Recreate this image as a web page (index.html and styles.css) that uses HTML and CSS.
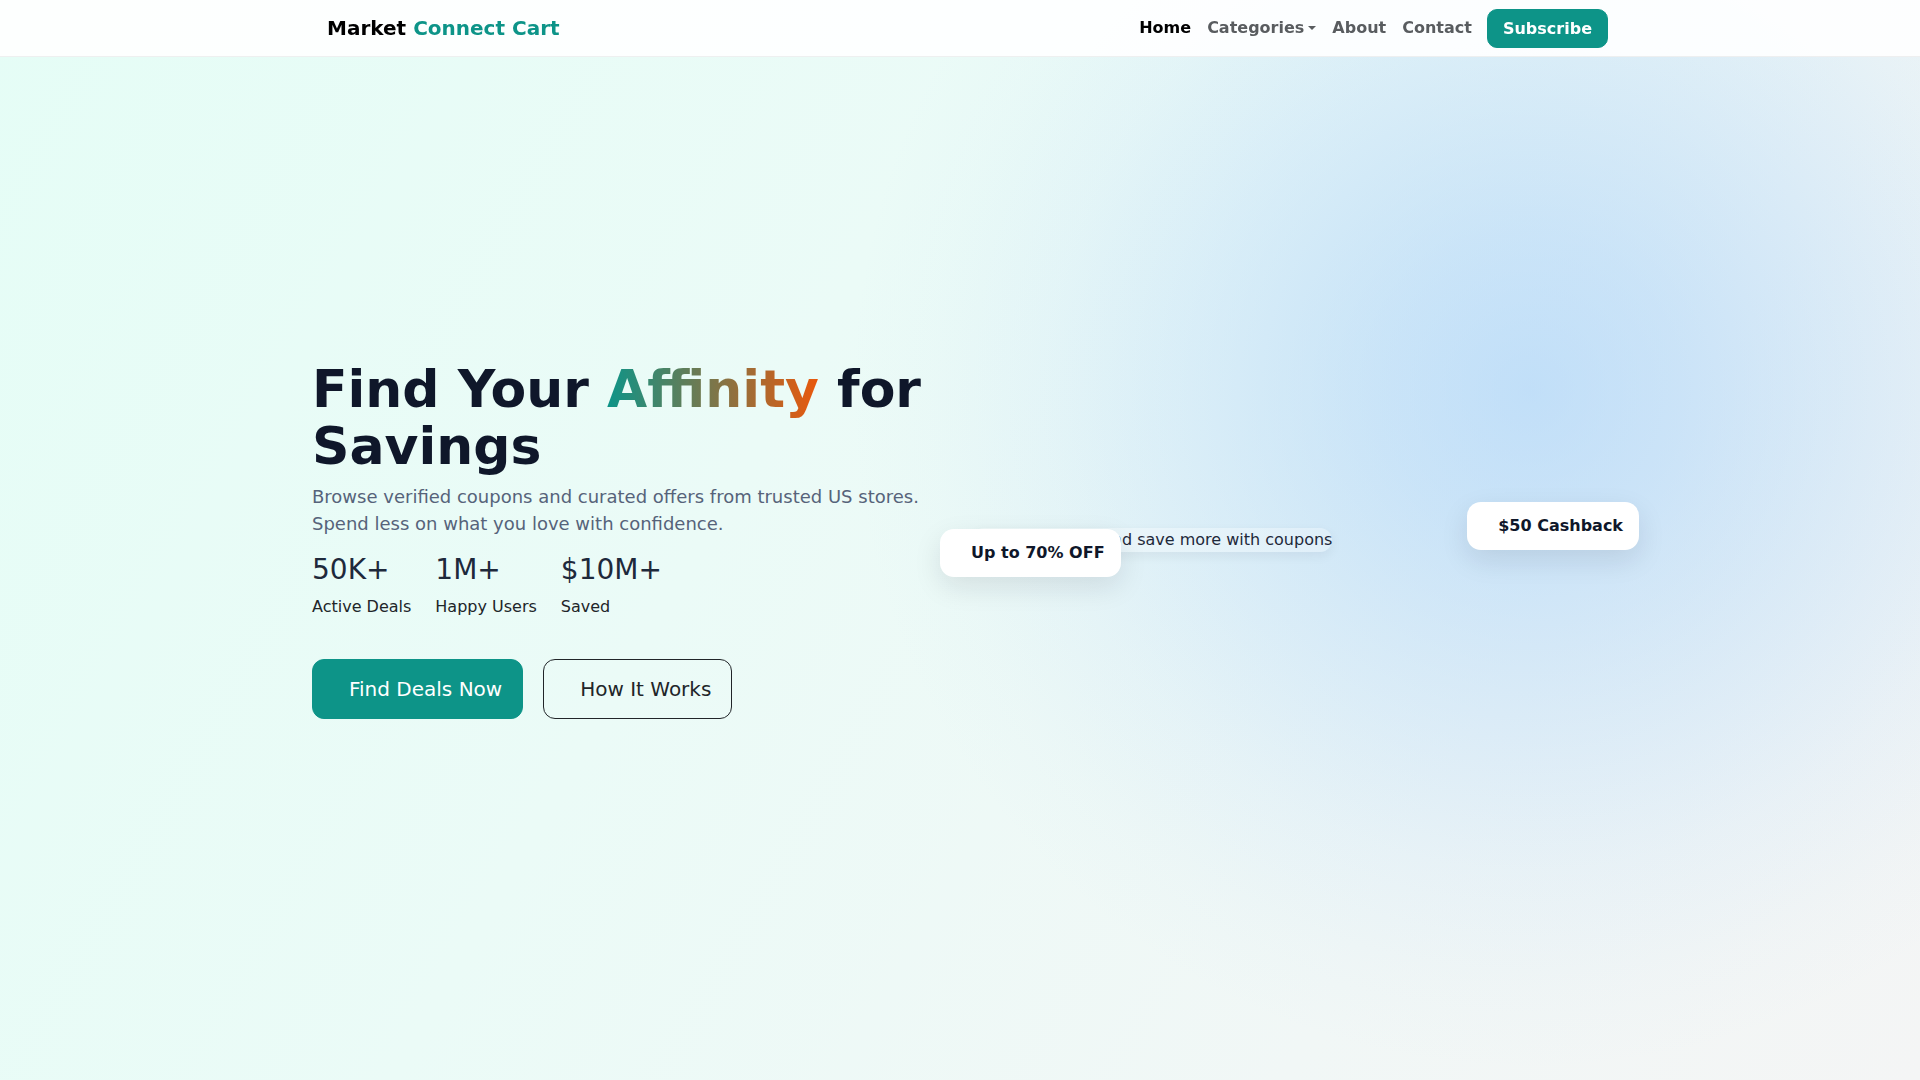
FILE: index.html
```html
<!DOCTYPE html>
<html lang="en">
<head>
<meta charset="utf-8">
<title>Market Connect Cart</title>
<link rel="stylesheet" href="styles.css">
</head>
<body>
<nav class="navbar">
  <div class="nav-inner">
    <a class="brand" href="#">Market <span class="accent">Connect Cart</span></a>
    <div class="nav-right">
      <ul class="nav-links">
        <li><a class="nav-link active" href="#">Home</a></li>
        <li><a class="nav-link dropdown" href="#">Categories<span class="caret"></span></a></li>
        <li><a class="nav-link" href="#">About</a></li>
        <li><a class="nav-link" href="#">Contact</a></li>
      </ul>
      <a class="btn-subscribe" href="#">Subscribe</a>
    </div>
  </div>
</nav>

<section class="hero">
  <div class="hero-inner">
    <div class="hero-left">
      <h1 class="hero-title">Find Your <span class="grad">Affinity</span> for Savings</h1>
      <p class="hero-lead">Browse verified coupons and curated offers from trusted US stores. Spend less on what you love with confidence.</p>
      <div class="stats">
        <div class="stat">
          <div class="stat-num">50K+</div>
          <div class="stat-label">Active Deals</div>
        </div>
        <div class="stat">
          <div class="stat-num">1M+</div>
          <div class="stat-label">Happy Users</div>
        </div>
        <div class="stat">
          <div class="stat-num">$10M+</div>
          <div class="stat-label">Saved</div>
        </div>
      </div>
      <div class="actions">
        <a class="btn btn-teal" href="#">Find Deals Now</a>
        <a class="btn btn-outline" href="#">How It Works</a>
      </div>
    </div>
    <div class="hero-right">
      <div class="visual">
        <div class="alt-pill">Shop smart and save more with coupons</div>
        <div class="float-card card-off">Up to 70% OFF</div>
        <div class="float-card card-cash">$50 Cashback</div>
      </div>
    </div>
  </div>
</section>
</body>
</html>
```

FILE: styles.css
```css
* { box-sizing: border-box; }

html, body {
  margin: 0;
  padding: 0;
}

body {
  font-family: "DejaVu Sans", "Noto Sans", sans-serif;
  font-size: 16px;
  line-height: 1.5;
  color: #212529;
  background: #f4f6f6;
}

a { text-decoration: none; }

/* NAVBAR */
.navbar {
  position: fixed;
  top: 0;
  left: 0;
  right: 0;
  height: 57px;
  background: rgba(255, 255, 255, 0.9);
  border-bottom: 1px solid rgba(0, 0, 0, 0.06);
  z-index: 10;
}

.nav-inner {
  width: 1320px;
  height: 100%;
  margin: 0 auto;
  padding: 0 12px;
  display: flex;
  align-items: center;
  justify-content: space-between;
}

.brand {
  font-size: 20px;
  font-weight: 700;
  color: #000;
  padding-left: 15px;
  line-height: 30px;
}

.brand .accent { color: #0d9488; }

.nav-right {
  display: flex;
  align-items: center;
}

.nav-links {
  list-style: none;
  margin: 0;
  padding: 0;
  display: flex;
  align-items: center;
}

.nav-link {
  display: block;
  padding: 8px 8px;
  font-size: 16px;
  font-weight: 700;
  color: rgba(33, 37, 41, 0.75);
  line-height: 24px;
}

.nav-link.active { color: #000; }

.caret {
  display: inline-block;
  margin-left: 4px;
  vertical-align: 3px;
  border-top: 4.8px solid;
  border-left: 4.8px solid transparent;
  border-right: 4.8px solid transparent;
}

.btn-subscribe {
  margin-left: 7px;
  display: inline-block;
  padding: 7px 15px;
  border: 1px solid #0d9488;
  background: #0d9488;
  color: #fff;
  font-weight: 700;
  font-size: 16px;
  line-height: 23px;
  border-radius: 10px;
}

/* HERO */
.hero {
  min-height: 1080px;
  display: flex;
  align-items: center;
  background:
    radial-gradient(circle at 1530px 390px,
      rgba(150, 200, 250, 0.52) 0px,
      rgba(150, 200, 250, 0.42) 150px,
      rgba(150, 200, 250, 0.26) 320px,
      rgba(150, 200, 250, 0.11) 480px,
      rgba(150, 200, 250, 0.03) 600px,
      rgba(150, 200, 250, 0) 680px),
    linear-gradient(120deg, #e5fdf6 0%, #ebfbf7 40%, #f1f7f6 75%, #f4f5f5 100%);
}

.hero-inner {
  width: 1320px;
  margin: 0 auto;
  padding: 0 12px;
  display: grid;
  grid-template-columns: 1fr 1fr;
  column-gap: 24px;
  align-items: center;
}

.hero-title {
  margin: 0 0 8px;
  font-size: 52px;
  line-height: 1.1;
  font-weight: 700;
  color: #0f172a;
}

.grad {
  background: linear-gradient(90deg, #0d9488 0%, #ea580c 100%);
  -webkit-background-clip: text;
  background-clip: text;
  color: transparent;
}

.hero-lead {
  margin: 0 0 16px;
  font-size: 18px;
  line-height: 27px;
  color: #56637a;
}

.stats {
  display: flex;
  gap: 24px;
  margin-bottom: 40px;
}

.stat-num {
  font-size: 28px;
  line-height: 1.2;
  color: #1e293b;
}

.stat-label {
  margin-top: 8px;
  font-size: 16px;
  line-height: 24px;
  color: #212529;
}

.actions {
  display: flex;
  gap: 20px;
}

.btn {
  display: inline-block;
  font-size: 20px;
  line-height: 30px;
  padding: 14px 20px 14px 36px;
  border-radius: 12px;
  border: 1px solid transparent;
}

.btn-teal {
  background: #0d9488;
  border-color: #0d9488;
  color: #fff;
}

.btn-outline {
  background: transparent;
  border-color: #212529;
  color: #212529;
}

/* VISUAL */
.visual {
  position: relative;
  height: 24px;
}

.alt-pill {
  display: inline-block;
  height: 24px;
  padding-left: 33px;
  font-size: 16px;
  line-height: 24px;
  color: #1e293b;
  background: rgba(255, 255, 255, 0.3);
  border-radius: 12px;
  box-shadow: 0 4px 12px rgba(15, 23, 42, 0.06);
  white-space: nowrap;
}

.float-card {
  position: absolute;
  background: #fff;
  border-radius: 14px;
  padding: 12px 16px 12px 31px;
  font-size: 16px;
  font-weight: 700;
  line-height: 24px;
  color: #0f172a;
  box-shadow: 0 10px 28px rgba(15, 23, 42, 0.1);
  white-space: nowrap;
}

.card-off {
  left: -32px;
  top: 1px;
}

.card-cash {
  right: -31px;
  top: -26px;
}
```
